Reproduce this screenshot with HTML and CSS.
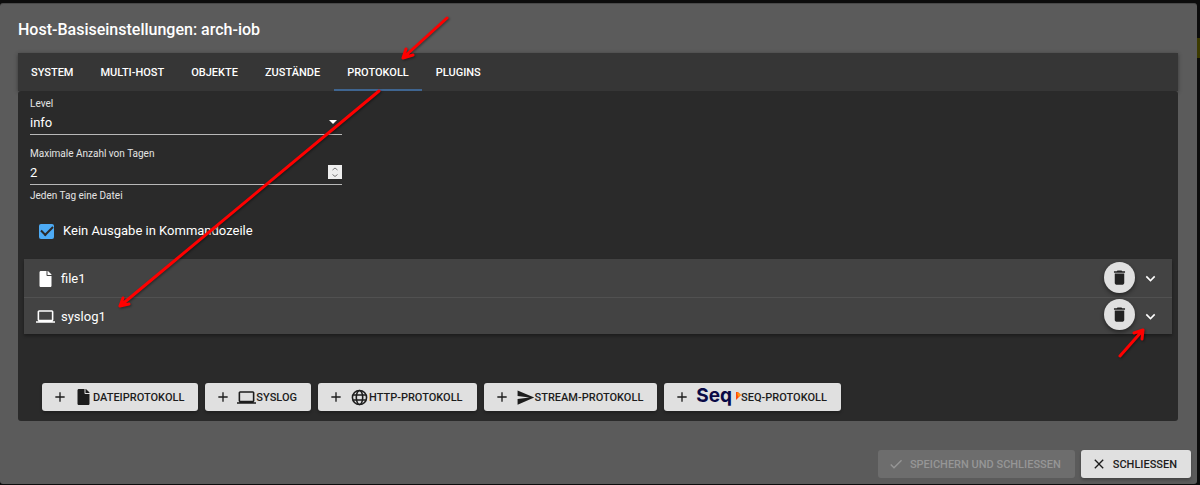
FILE: index.html
```html
<!DOCTYPE html>
<html lang="de">
<head>
<meta charset="utf-8">
<title>Host-Basiseinstellungen</title>
<link rel="stylesheet" href="styles.css">
</head>
<body>
<svg class="defs" aria-hidden="true">
  <symbol id="plus" viewBox="0 0 24 24"><path d="M19 13h-6v6h-2v-6H5v-2h6V5h2v6h6v2z"/></symbol>
  <symbol id="file" viewBox="0 0 384 512"><path d="M224 136V0H44C20 0 0 20 0 44v424c0 24 20 44 44 44h296c24 0 44-20 44-44V160H248c-13.200 0-24-10.800-24-24zm160-14.100v6.100H256V0h6.100c6.400 0 12.500 2.500 17 7l97.900 98c4.500 4.500 7 10.600 7 16.900z"/></symbol>
  <symbol id="laptop" viewBox="0 0 24 24"><path d="M20 18c1.100 0 2-.9 2-2V6c0-1.100-.9-2-2-2H4c-1.100 0-2 .9-2 2v10c0 1.100.9 2 2 2H0v2h24v-2h-4zM4 6h16v10H4V6z"/></symbol>
  <symbol id="globe" viewBox="0 0 24 24"><g fill="none" stroke="currentColor" stroke-width="2.200"><circle cx="12" cy="12" r="10"/><ellipse cx="12" cy="12" rx="4.500" ry="10"/><path d="M3 8.500h18M3 15.500h18"/></g></symbol>
  <symbol id="send" viewBox="0 0 24 24"><path d="M2 3l21 9-21 9v-7l15-2-15-2V3z"/></symbol>
  <symbol id="trash" viewBox="0 0 24 24"><path d="M6 19c0 1.100.9 2 2 2h8c1.100 0 2-.9 2-2V7H6v12zM19 4h-3.500l-1-1h-5l-1 1H5v2h14V4z"/></symbol>
  <symbol id="chevron" viewBox="0 0 24 24"><path d="M16.600 8.600L12 13.200 7.400 8.600 6 10l6 6 6-6z"/></symbol>
  <symbol id="check" viewBox="0 0 24 24"><path d="M9 16.200L4.800 12l-1.400 1.400L9 19 21 7l-1.400-1.400L9 16.200z"/></symbol>
  <symbol id="close" viewBox="0 0 24 24"><path d="M19 6.400L17.600 5 12 10.600 6.400 5 5 6.400 10.600 12 5 17.600 6.400 19 12 13.400 17.600 19 19 17.600 13.400 12z"/></symbol>
</svg>

<main class="dialog" role="dialog" aria-labelledby="title">
  <h1 class="title" id="title">Host-Basiseinstellungen: arch-iob</h1>

  <section class="content">
    <nav class="tabs" role="tablist">
      <button class="tab" role="tab">SYSTEM</button>
      <button class="tab" role="tab">MULTI-HOST</button>
      <button class="tab" role="tab">OBJEKTE</button>
      <button class="tab" role="tab">ZUSTÄNDE</button>
      <button class="tab tab-active" role="tab" aria-selected="true">PROTOKOLL</button>
      <button class="tab" role="tab">PLUGINS</button>
    </nav>

    <div class="panel">
      <div class="fields">
        <div class="field">
          <label class="label" for="level">Level</label>
          <div class="control">
            <select class="input" id="level"><option>info</option></select>
            <svg class="caret" viewBox="0 0 8 4"><path d="M0 0h8L4 4z"/></svg>
          </div>
        </div>
        <div class="field">
          <label class="label" for="days">Maximale Anzahl von Tagen</label>
          <div class="control">
            <input class="input" id="days" type="number" value="2">
            <svg class="spinner" viewBox="0 0 14 14"><path d="M4.500 5L7 3l2.500 2M4.500 9.500l2.500 2 2.500-2"/></svg>
          </div>
          <p class="helper">Jeden Tag eine Datei</p>
        </div>
      </div>

      <div class="checkrow">
        <input class="checkbox" id="quiet" type="checkbox" checked>
        <label for="quiet">Kein Ausgabe in Kommandozeile</label>
      </div>

      <div class="entries">
        <div class="entry">
          <svg class="entry-icon entry-file"><use href="#file"/></svg>
          <span class="entry-name">file1</span>
          <button class="delete" aria-label="Löschen"><svg class="icon-delete"><use href="#trash"/></svg></button>
          <button class="expand" aria-label="Aufklappen"><svg class="icon-expand"><use href="#chevron"/></svg></button>
        </div>
        <div class="entry">
          <svg class="entry-icon"><use href="#laptop"/></svg>
          <span class="entry-name">syslog1</span>
          <button class="delete" aria-label="Löschen"><svg class="icon-delete"><use href="#trash"/></svg></button>
          <button class="expand" aria-label="Aufklappen"><svg class="icon-expand"><use href="#chevron"/></svg></button>
        </div>
      </div>

      <div class="adders">
        <button class="button"><svg class="lead"><use href="#plus"/></svg><svg class="kind kind-file"><use href="#file"/></svg>DATEIPROTOKOLL</button>
        <button class="button"><svg class="lead"><use href="#plus"/></svg><svg class="kind"><use href="#laptop"/></svg>SYSLOG</button>
        <button class="button"><svg class="lead"><use href="#plus"/></svg><svg class="kind kind-globe"><use href="#globe"/></svg>HTTP-PROTOKOLL</button>
        <button class="button"><svg class="lead"><use href="#plus"/></svg><svg class="kind"><use href="#send"/></svg>STREAM-PROTOKOLL</button>
        <button class="button"><svg class="lead"><use href="#plus"/></svg><span class="seq">Seq</span><svg class="seq-mark" viewBox="0 0 5 8"><path fill="#ff4a0a" d="M0 0h2l3 3-5 5z"/><path fill="#ff9b12" d="M1 0l4 3-3 2z"/></svg>SEQ-PROTOKOLL</button>
      </div>
    </div>
  </section>

  <footer class="actions">
    <button class="button button-disabled" disabled><svg class="act"><use href="#check"/></svg>SPEICHERN UND SCHLIESSEN</button>
    <button class="button"><svg class="act"><use href="#close"/></svg>SCHLIESSEN</button>
  </footer>
</main>
<div class="backdrop-mark"></div>

<svg class="arrows" width="1200" height="485" aria-hidden="true">
  <path d="M447 18L404 57M406 49L403 58L413 55"/>
  <path d="M379 91L120 306M123 298L120 306L129 304"/>
  <path d="M1120 356L1143 330M1134 333L1143 330L1142 339"/>
</svg>
</body>
</html>
```

FILE: styles.css
```css
* { box-sizing: border-box; }
body {
  margin: 0;
  min-height: 100vh;
  padding: 3px 3px 1px 0;
  background: #0c0c0c;
  color: #fff;
  font-family: Roboto, "Noto Sans", sans-serif;
  font-size: 13px;
}
button, input, select { font: inherit; color: inherit; }
button { border: 0; cursor: pointer; }
svg { fill: currentColor; flex: none; }
.defs { display: none; }

.dialog {
  min-height: calc(100vh - 4px);
  display: flex;
  flex-direction: column;
  background: #5b5b5b;
  border-radius: 3px;
  border-top: 1px solid #484848;
}
.title {
  margin: 0;
  padding: 13px 18px 10px;
  font-size: 16px;
  line-height: 26px;
  font-weight: 500;
}
.content { margin: 0 19px 0 18px; flex: 1; display: flex; flex-direction: column; }

.tabs {
  display: flex;
  gap: 1px;
  height: 38px;
  background: #363636;
  box-shadow: 0 1px 4px #0006;
}
.tab {
  padding: 2px 13px 0;
  background: none;
  border-bottom: 2px solid transparent;
  font-size: 11px;
  font-weight: 500;
}
.tab-active { border-color: #3f6590; }

.panel {
  position: relative;
  flex: 1;
  display: flex;
  flex-direction: column;
  padding: 7px 6px 10px;
  background: #2a2a2a;
  border-radius: 3px;
}
.fields { display: flex; flex-direction: column; gap: 13px; padding-left: 6px; width: 318px; }
.label { display: block; font-size: 10px; line-height: 12px; color: #e4e4e4; }
.control {
  display: flex;
  align-items: center;
  height: 25px;
  border-bottom: 1px solid #b8b8b8;
}
.input {
  flex: 1;
  min-width: 0;
  padding: 0;
  border: 0;
  outline: 0;
  background: none;
  appearance: none;
}
input[type="number"] { appearance: textfield; }
.caret { width: 8px; height: 4px; margin-right: 5px; }
.spinner { width: 14px; height: 14px; background: #eee; fill: none; stroke: #777; }
.helper { margin: 5px 0 0; font-size: 10px; line-height: 12px; color: #e4e4e4; }

.checkrow { display: flex; align-items: center; gap: 9px; margin-top: 19px; padding-left: 15px; line-height: 20px; }
.checkbox {
  appearance: none;
  width: 15px;
  height: 15px;
  margin: 0;
  border-radius: 2px;
  background: #4dabf5;
  display: grid;
  place-items: center;
}
.checkbox:checked::before {
  content: "";
  width: 10px;
  height: 5px;
  margin-top: -3px;
  border: solid #2a2a2a;
  border-width: 0 0 2px 2px;
  transform: rotate(-45deg);
}

.entries { margin-top: 18px; background: #434343; box-shadow: 0 2px 3px #0005; }
.entry { display: flex; align-items: center; height: 38px; padding: 1px 12px 0; }
.entry + .entry { height: 37px; padding-top: 0; border-top: 1px solid #515151; }
.entry-icon { width: 19px; height: 19px; margin-right: 6px; }
.entry-file { height: 16px; }
.entry-name { flex: 1; }
.delete {
  display: grid;
  place-items: center;
  width: 31px;
  height: 31px;
  margin-bottom: 3px;
  padding: 0;
  border-radius: 50%;
  background: #e0e0e0;
  color: #222;
  box-shadow: 0 2px 4px #0007;
}
.icon-delete { width: 19px; height: 19px; }
.expand { display: grid; margin-left: 6px; padding: 0; background: none; }
.icon-expand { width: 19px; height: 19px; }

.adders { display: flex; flex-wrap: wrap; gap: 7px; margin-top: auto; padding-left: 18px; }
.button {
  display: flex;
  align-items: center;
  height: 28px;
  padding: 0 14px 0 12px;
  border-radius: 3px;
  background: #e0e0e0;
  color: #1c1c1c;
  font-size: 11px;
  font-weight: 500;
  box-shadow: 0 2px 3px #0004;
}
.lead { width: 16px; height: 16px; margin: 0 6px 0 -2px; }
.kind { width: 19px; height: 19px; }
.kind-file { height: 16px; }
.kind-globe { height: 17px; }
.seq { color: #0a0a46; font: 700 19px/20px Inter, sans-serif; margin-bottom: 3px; }
.seq-mark { width: 5px; height: 8px; margin: 0 0 3px 4px; }

.actions { display: flex; justify-content: flex-end; gap: 6px; padding: 29px 6px 6px; }
.act { width: 16px; height: 16px; margin: 0 6px 0 -2px; }
.button-disabled { background: #6d6d6d; color: #969696; box-shadow: none; }

.backdrop-mark { position: absolute; right: 0; top: 38px; width: 3px; height: 20px; background: #3c3a00; }
.arrows {
  position: absolute;
  left: 0;
  top: 0;
  pointer-events: none;
  fill: none;
  stroke: #f00;
  stroke-width: 3;
  stroke-linecap: round;
  stroke-linejoin: round;
  filter: drop-shadow(1px 1px 1px #0006);
}
```
